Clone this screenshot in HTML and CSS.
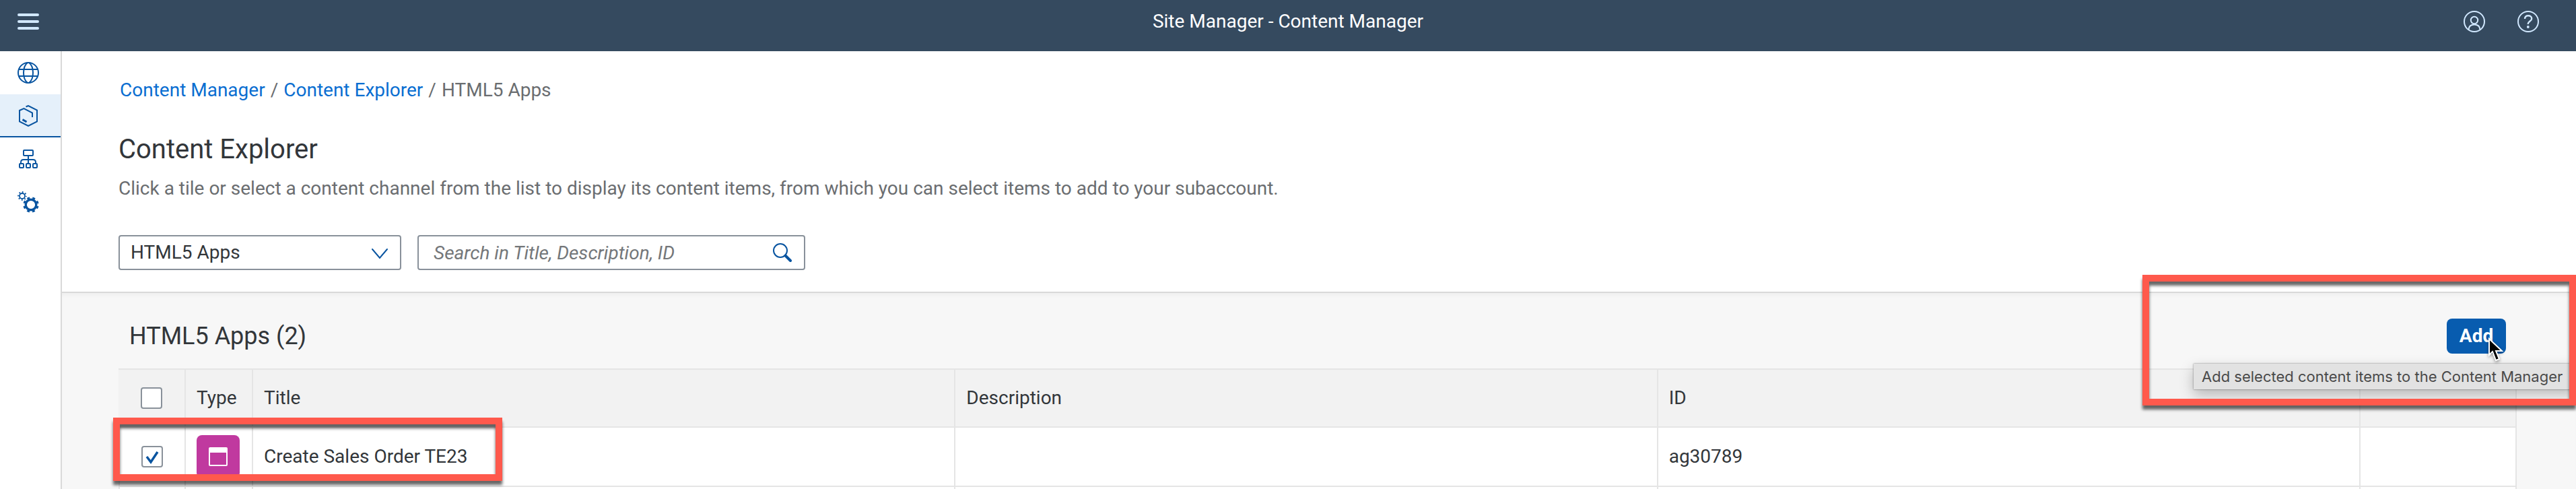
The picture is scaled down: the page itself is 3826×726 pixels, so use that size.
FILE: index.html
```html
<!DOCTYPE html>
<html lang="en">
<head>
<meta charset="utf-8">
<title>Site Manager - Content Manager</title>
<link rel="stylesheet" href="styles.css">
</head>
<body>
<header class="shell">
  <button class="icon-btn" aria-label="Menu">
    <svg class="icon" viewBox="0 0 32 32"><path d="M2 6h28M2 16h28M2 26h28" stroke="currentColor" stroke-width="4" stroke-linecap="round"/></svg>
  </button>
  <div class="shell-title">Site Manager - Content Manager</div>
  <div class="shell-actions">
    <button class="icon-btn" aria-label="User">
      <svg class="icon" viewBox="0 0 32 32" fill="none" stroke="currentColor" stroke-width="2"><circle cx="16" cy="16" r="15"/><circle cx="16" cy="14" r="5.2"/><path d="M7.500 28c.3-4.600 3.500-7.500 8.500-7.500s8.200 2.900 8.500 7.500"/></svg>
    </button>
    <button class="icon-btn" aria-label="Help">
      <svg class="icon" viewBox="0 0 32 32" fill="none" stroke="currentColor" stroke-width="2"><circle cx="16" cy="16" r="15"/><path d="M11 12c0-3.200 2-4.700 5-4.700s5.200 1.700 5.200 4.400c0 4-5.600 3.800-5.600 8.300" stroke-width="2.400"/><circle cx="15.800" cy="24" r="1.900" fill="currentColor" stroke="none"/></svg>
    </button>
  </div>
</header>
<div class="body">
  <nav class="side">
    <a class="side-item" href="#" aria-label="Sites">
      <svg class="icon" viewBox="0 0 32 32" fill="none" stroke="currentColor" stroke-width="2"><circle cx="16" cy="16" r="15"/><path d="M2 11h28M2 21h28M15 1C11 4 9 10 9 16s2 12 6 15M17 1c4 3 6 9 6 15s-2 12-6 15"/></svg>
    </a>
    <a class="side-item selected" href="#" aria-label="Content Manager">
      <svg class="icon" viewBox="0 0 32 32" fill="none" stroke="currentColor" stroke-width="2"><path d="M12.500 2.500 16 1l13 6.500v17L16 31 3 24.500V8l6.500-3L22 11.500V18"/><path d="m7.500 21.500 6 3.500" stroke-width="3"/></svg>
    </a>
    <a class="side-item" href="#" aria-label="Channels">
      <svg class="icon" viewBox="0 0 32 32" fill="none" stroke="currentColor" stroke-width="2"><rect x="9" y="3" width="14" height="8" rx="1"/><rect x="3" y="23" width="6" height="6" rx="1"/><rect x="13" y="23" width="6" height="6" rx="1"/><rect x="23" y="23" width="6" height="6" rx="1"/><path d="M16 11v12M5 23v-2c0-2 1-4 4-4h14c3 0 4 2 4 4v2"/></svg>
    </a>
    <a class="side-item" href="#" aria-label="Settings">
      <svg class="icon" viewBox="0 0 32 32" fill="none" stroke="currentColor"><circle cx="20" cy="20" r="7.800" stroke-width="3.400"/><circle cx="20" cy="20" r="10.300" stroke-width="2.800" stroke-dasharray="3.900 4.190" stroke-dashoffset="-2"/><circle cx="7" cy="7" r="4" stroke-width="1.800"/><circle cx="7" cy="7" r="5.900" stroke-width="2" stroke-dasharray="1.700 2.934" stroke-dashoffset=".85"/></svg>
    </a>
  </nav>
  <main class="main">
    <section class="page-head">
      <nav class="crumbs" aria-label="Breadcrumb"><a href="#">Content Manager</a><span>/</span><a href="#">Content Explorer</a><span>/</span><span>HTML5 Apps</span></nav>
      <h1>Content Explorer</h1>
      <p class="lead">Click a tile or select a content channel from the list to display its content items, from which you can select items to add to your subaccount.</p>
      <div class="filters">
        <div class="field channel">
          <select aria-label="Content channel"><option>HTML5 Apps</option></select>
          <svg class="chevron" viewBox="0 0 24 16" fill="none" stroke="currentColor" stroke-width="2" stroke-linecap="round"><path d="m1 1 11 13L23 1"/></svg>
        </div>
        <div class="field search">
          <input type="text" aria-label="Search" placeholder="Search in Title, Description, ID">
          <button class="search-btn" aria-label="Search"><svg viewBox="0 0 28 28" fill="none" stroke="currentColor"><circle cx="11" cy="11" r="10" stroke-width="2"/><path d="m18.500 18.500 7.500 7.500" stroke-width="4" stroke-linecap="round"/></svg></button>
        </div>
      </div>
    </section>
    <section class="content">
      <div class="toolbar">
        <h2>HTML5 Apps (2)</h2>
        <button class="add">Add</button>
        <svg class="cursor" viewBox="0 0 26 38"><path d="M2 3v24l5-5 5 13 5-2-5-12h9z" fill="#000" stroke="#fff" stroke-width="2"/></svg>
        <div class="tooltip" role="tooltip">Add selected content items to the Content Manager</div>
        <div class="mark mark-add"></div>
      </div>
      <table>
        <colgroup><col class="c-check"><col class="c-type"><col><col><col><col class="c-nav"></colgroup>
        <thead><tr>
          <th class="check"><input type="checkbox" aria-label="Select all"></th>
          <th>Type</th><th>Title</th><th>Description</th><th>ID</th><th></th>
        </tr></thead>
        <tbody>
          <tr>
            <td class="check"><input type="checkbox" aria-label="Select Create Sales Order TE23" checked><div class="mark mark-row"></div></td>
            <td><span class="tile"><svg viewBox="0 0 28 28"><path d="M2 0h24a2 2 0 0 1 2 2v24a2 2 0 0 1-2 2H2a2 2 0 0 1-2-2V2a2 2 0 0 1 2-2zm0 8v18h24V8z" fill="#fff" fill-rule="evenodd"/></svg></span></td>
            <td>Create Sales Order TE23</td><td></td><td>ag30789</td><td></td>
          </tr>
          <tr class="next"><td></td><td></td><td></td><td></td><td></td><td></td></tr>
        </tbody>
      </table>
    </section>
  </main>
</div>
</body>
</html>
```
FILE: styles.css
```css
* { box-sizing: border-box; }

html, body { height: 100%; }

body {
  margin: 0;
  display: flex;
  flex-direction: column;
  overflow: hidden;
  background: #fff;
  color: #32363a;
  font: 28px/32px Roboto, "Liberation Sans", sans-serif;
}

button, input, select { font: inherit; color: inherit; }

button { padding: 0; border: 0; background: none; cursor: pointer; }

svg { display: block; }

.icon { width: 32px; height: 32px; }

/* Shell bar */
.shell {
  flex: none;
  display: grid;
  grid-template-columns: 1fr auto 1fr;
  align-items: start;
  height: 76px;
  padding: 16px 55px 0 26px;
  background: #354a5f;
}

.shell .icon-btn { color: #d1e8ff; justify-self: start; }

.shell-title { color: #fff; padding-left: 29px; }

.shell-actions { display: flex; gap: 48px; justify-self: end; }

/* Side navigation */
.body { flex: 1; display: flex; min-height: 0; }

.side {
  flex: none;
  width: 92px;
  border-right: 2px solid #d9d9d9;
}

.side-item {
  display: flex;
  align-items: center;
  height: 64px;
  padding-left: 26px;
  color: #0854a0;
}

.side-item.selected {
  background: #e5f0fa;
  box-shadow: inset 0 -2px #0854a0;
}

/* Page header */
.main {
  flex: 1;
  display: flex;
  flex-direction: column;
  min-width: 0;
  overflow: hidden;
}

.page-head { flex: none; padding: 42px 84px 32px; }

.crumbs { display: flex; gap: 8px; padding-left: 2px; color: #6a6d70; }

.crumbs a { color: #0a6ed1; text-decoration: none; }

h1 { margin: 48px 0 0; font-size: 40px; line-height: 48px; font-weight: 400; }

.lead { margin: 18px 0 0; color: #6a6d70; }

.filters { display: flex; gap: 24px; margin-top: 53px; }

.field {
  position: relative;
  height: 52px;
  border: 2px solid #89919a;
  border-radius: 4px;
}

.channel { width: 420px; }

.search { width: 576px; display: flex; }

.field select, .field input {
  width: 100%;
  height: 100%;
  padding: 0 16px;
  border: 0;
  outline: 0;
  background: none;
  appearance: none;
}

.field input { padding-left: 22px; }

.field input::placeholder { color: #74777a; font-style: italic; opacity: 1; }

.chevron {
  position: absolute;
  right: 18px;
  top: 18px;
  width: 24px;
  height: 16px;
  color: #0854a0;
  pointer-events: none;
}

.search-btn { flex: none; margin-right: 18px; color: #0854a0; }

.search-btn svg { width: 28px; height: 28px; }

/* Table area */
.content {
  flex: 1;
  min-height: 0;
  padding: 0 88px 0 84px;
  border-top: 2px solid #d9d9d9;
  background: #f7f7f7;
  box-shadow: inset 0 6px 4px -2px #f0f0f0;
}

.toolbar {
  position: relative;
  display: flex;
  align-items: center;
  justify-content: space-between;
  height: 112px;
  padding: 16px 16px 0;
}

.toolbar h2 { margin: 0; font-size: 36px; line-height: 44px; font-weight: 400; }

.add {
  width: 88px;
  height: 52px;
  border-radius: 8px;
  background: #085caf;
  color: #fff;
  font-weight: 700;
}

table {
  width: 100%;
  border-collapse: separate;
  border-spacing: 0;
  table-layout: fixed;
  border-top: 2px solid #e5e5e5;
}

.c-check, .c-type { width: 100px; }

.c-nav { width: 232px; }

th, td {
  height: 86px;
  padding: 0 16px;
  border-right: 2px solid #e5e5e5;
  border-bottom: 2px solid #e5e5e5;
  text-align: left;
  font-weight: 400;
}

th { background: #f2f2f2; }

td { height: 88px; background: #fff; }

td:first-child { border-left: 2px solid #e5e5e5; }

.next td { height: 3px; border-bottom: 0; }

th.check { padding: 0 0 0 33px; }

td.check { position: relative; padding: 0 0 0 32px; }

.check input {
  display: block;
  width: 32px;
  height: 32px;
  margin: 0;
  appearance: none;
  border: 2px solid #89919a;
  border-radius: 4px;
  background: #fff;
}

.check input:checked {
  background: #fff url("data:image/svg+xml,%3Csvg xmlns='http://www.w3.org/2000/svg' viewBox='0 0 28 28'%3E%3Cpath d='M6 14l6 8L22 7' fill='none' stroke='%230854a0' stroke-width='3.500'/%3E%3C/svg%3E") center / 28px no-repeat;
}

.tile {
  display: flex;
  align-items: center;
  justify-content: center;
  width: 64px;
  height: 64px;
  border-radius: 8px;
  background: #c0399f;
}

.tile svg { width: 28px; height: 28px; }

/* Overlays */
.tooltip {
  position: absolute;
  top: 105px;
  right: -88px;
  width: 568px;
  height: 38px;
  padding-left: 12px;
  background: #e2e2e2;
  box-shadow: 0 0 2px rgba(0, 0, 0, .5), 0 8px 20px rgba(0, 0, 0, .25);
  color: #4a4a4a;
  font: 22px/38px Inter, sans-serif;
  white-space: nowrap;
  z-index: 1;
}

.cursor {
  position: absolute;
  top: 65px;
  right: 17px;
  width: 26px;
  height: 38px;
  filter: drop-shadow(0 2px 2px rgba(0, 0, 0, .4));
  z-index: 2;
}

.mark {
  position: absolute;
  border: 10px solid #ff594c;
  filter: drop-shadow(0 6px 2px rgba(0, 0, 0, .6));
  pointer-events: none;
  z-index: 3;
}

.mark-add { top: -27px; right: -88px; width: 644px; height: 194px; }

.mark-row { top: -15px; left: -10px; width: 578px; height: 94px; }
```
